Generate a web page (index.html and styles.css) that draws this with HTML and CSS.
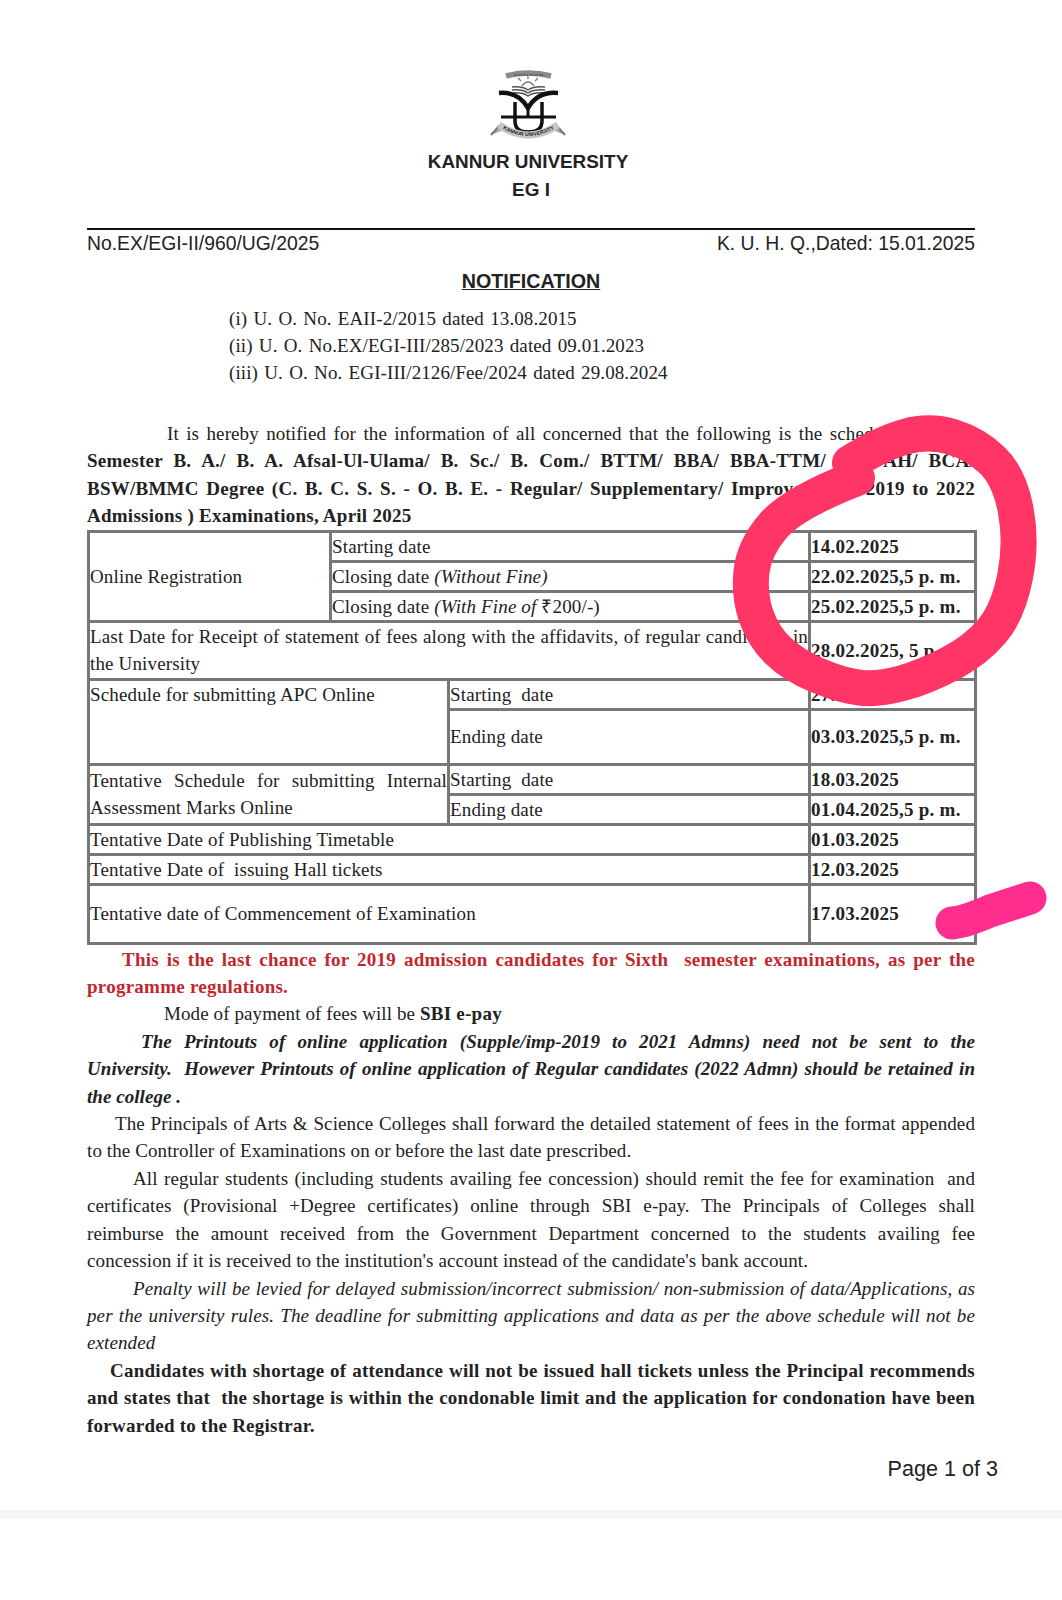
FILE: index.html
```
<!DOCTYPE html>
<html lang="en">
<head>
    <meta charset="UTF-8">
    <meta name="viewport" content="width=device-width, initial-scale=1.0">
    <title>Kannur University Notification</title>
    <link rel="stylesheet" href="styles.css">
</head>
<body>
    <div class="page">
        <div class="head">
            <svg class="crest" viewBox="2 0 90 80" width="90" height="80">
                <path d="M22 11 Q44 5 67 11" fill="none" stroke="#8a8a8a" stroke-width="5.5"/>
                <path d="M30 10 H60" fill="none" stroke="#333" stroke-width="1" stroke-dasharray="1.5 1"/>
                <path d="M38 21 Q44 13 50 21 M44 14 V11 M37 16 L34 13 M51 16 L54 13" fill="none" stroke="#777" stroke-width="1.3"/>
                <path d="M28 22 Q38 21 44 25 Q50 21 61 22 M28 25 Q38 24 44 28 Q50 24 61 25 M29 28 Q38 27 44 31 Q50 27 60 28" fill="none" stroke="#555" stroke-width="1.5"/>
                <path d="M15 28 Q34 26 44 43 Q54 26 74 28" fill="none" stroke="#111" stroke-width="4.5"/>
                <path d="M31 37 V56 Q31 67 44 67 Q58 67 58 56 V37" fill="none" stroke="#111" stroke-width="3.5"/>
                <path d="M44 42 V52 M17 52 H72" fill="none" stroke="#111" stroke-width="3"/>
                <path d="M7 70 L15 61 L22 64 M81 70 L73 61 L66 64" fill="#aaa" stroke="#777" stroke-width="2"/>
                <path id="crest-band" d="M15 60 Q44 80 74 60" fill="none" stroke="#c4c4c4" stroke-width="7"/>
                <text class="crest-text"><textPath href="#crest-band" startOffset="50%" text-anchor="middle">KANNUR UNIVERSITY</textPath></text>
            </svg>
            <div class="uni uni-name">KANNUR UNIVERSITY</div>
            <div class="uni">EG I</div>
        </div>
        <hr class="rule">
        <div class="refline">
            <span>No.EX/EGI-II/960/UG/2025</span>
            <span>K. U. H. Q.,Dated: 15.01.2025</span>
        </div>
        <div class="title">NOTIFICATION</div>
        <ul class="refs">
            <li>(i) U. O. No. EAII-2/2015 dated 13.08.2015</li>
            <li>(ii) U. O. No.EX/EGI-III/285/2023 dated 09.01.2023</li>
            <li>(iii) U. O. No. EGI-III/2126/Fee/2024 dated 29.08.2024</li>
        </ul>
        <p class="para intro">It is hereby notified for the information of all concerned that the following is the schedule for Sixth <b>Semester B. A./ B. A. Afsal-Ul-Ulama/ B. Sc./ B. Com./ BTTM/ BBA/ BBA-TTM/ BBA-AH/ BCA/ BSW/BMMC Degree (C. B. C. S. S. - O. B. E. - Regular/ Supplementary/ Improvement - 2019 to 2022 Admissions ) Examinations, April 2025</b></p>
        <table class="sched">
            <colgroup>
                <col class="c1"><col class="c2"><col class="c3"><col class="c4">
            </colgroup>
            <tr class="h30">
                <td rowspan="3">Online Registration</td>
                <td colspan="2">Starting date</td>
                <td class="dt">14.02.2025</td>
            </tr>
            <tr class="h30">
                <td colspan="2">Closing date <i>(Without Fine)</i></td>
                <td class="dt">22.02.2025,5 p. m.</td>
            </tr>
            <tr class="h30">
                <td colspan="2">Closing date <i>(With Fine of </i>₹200/-)</td>
                <td class="dt">25.02.2025,5 p. m.</td>
            </tr>
            <tr class="h58">
                <td colspan="3" class="just">Last Date for Receipt of statement of fees along with the affidavits, of regular candidates in the University</td>
                <td class="dt">28.02.2025, 5 p. m.</td>
            </tr>
            <tr class="h30">
                <td colspan="2" rowspan="2" class="top">Schedule for submitting APC Online</td>
                <td>Starting &nbsp;date</td>
                <td class="dt">27.02.2025</td>
            </tr>
            <tr class="h55">
                <td>Ending date</td>
                <td class="dt">03.03.2025,5 p. m.</td>
            </tr>
            <tr class="h30">
                <td colspan="2" rowspan="2" class="just">Tentative Schedule for submitting Internal Assessment Marks Online</td>
                <td>Starting &nbsp;date</td>
                <td class="dt">18.03.2025</td>
            </tr>
            <tr class="h30">
                <td>Ending date</td>
                <td class="dt">01.04.2025,5 p. m.</td>
            </tr>
            <tr class="h30">
                <td colspan="3">Tentative Date of Publishing Timetable</td>
                <td class="dt">01.03.2025</td>
            </tr>
            <tr class="h30">
                <td colspan="3">Tentative Date of &nbsp;issuing Hall tickets</td>
                <td class="dt">12.03.2025</td>
            </tr>
            <tr class="h59">
                <td colspan="3">Tentative date of Commencement of Examination</td>
                <td class="dt">17.03.2025</td>
            </tr>
        </table>
        <p class="para red"><b>This is the last chance for 2019 admission candidates for Sixth &nbsp;semester examinations, as per the programme regulations.</b></p>
        <p class="para mode">Mode of payment of fees will be <b>SBI e-pay</b></p>
        <p class="para ind54 fill-last"><b><i>The Printouts of online application (Supple/imp-2019 to 2021 Admns) need not be sent to the</i></b></p>
        <p class="para"><b><i>University. &nbsp;However Printouts of online application of Regular candidates (2022 Admn) should be retained in the college .</i></b></p>
        <p class="para ind28">The Principals of Arts &amp; Science Colleges shall forward the detailed statement of fees in the format appended to the Controller of Examinations on or before the last date prescribed.</p>
        <p class="para ind46 fill-last">All regular students (including students availing fee concession) should remit the fee for examination &nbsp;and certificates (Provisional +Degree certificates) online through SBI e-pay. The Principals of Colleges shall</p>
        <p class="para">reimburse the amount received from the Government Department concerned to the students availing fee concession if it is received to the institution's account instead of the candidate's bank account.</p>
        <p class="para ind46"><i>Penalty will be levied for delayed submission/incorrect submission/ non-submission of data/Applications, as per the university rules. The deadline for submitting applications and data as per the above schedule will not be extended</i></p>
        <p class="para ind23"><b>Candidates with shortage of attendance will not be issued hall tickets unless the Principal recommends and states that &nbsp;the shortage is within the condonable limit and the application for condonation have been forwarded to the Registrar.</b></p>
        <div class="pageno">Page 1 of 3</div>
    </div>
    <div class="band"></div>

    <svg class="ink" viewBox="0 0 1062 1600" width="1062" height="1600">
        <path class="ring" d="M850,463 Q882,443 906,436.5 Q930,430 952.5,437 Q975,444 992,460 Q1009,476 1015.5,509 Q1022,542 1015,577 Q1008,612 992,631 Q976,650 950.5,663.5 Q925,677 901,683.5 Q877,690 858.5,687.5 Q840,685 816.5,675 Q793,665 778,650.5 Q763,636 756,615.5 Q749,595 751.5,571.5 Q754,548 773.5,525.5 Q793,503 857,478"/>
        <path class="dash" d="M952,923 Q965,922 990,911 L1030,898"/>
    </svg>
</body>
</html>
```
FILE: styles.css
```
body {
    margin: 0;
    background-color: #fff;
    color: #222;
    font-family: "Liberation Serif", "Times New Roman", serif;
}
.page {
    box-sizing: border-box;
    height: 1510px;
    padding: 65px 87px 0;
}
.head {
    text-align: center;
}
.crest {
    display: block;
    margin: 0 auto 3px;
}
.crest-text {
    font-family: "Liberation Sans", Arial, sans-serif;
    font-weight: bold;
    font-size: 5px;
    fill: #222;
    dominant-baseline: middle;
}
.uni {
    font-family: "Liberation Sans", Arial, sans-serif;
    font-weight: bold;
    font-size: 18.9px;
    line-height: 27.5px;
}
.uni-name {
    padding-right: 6px;
}
.rule {
    border: none;
    border-top: 2px solid #111;
    margin: 25px 0 0;
}
.refline {
    display: flex;
    justify-content: space-between;
    font-family: "Liberation Sans", Arial, sans-serif;
    font-size: 19.35px;
    line-height: 28px;
    margin-top: -1px;
}
.title {
    font-family: "Liberation Sans", Arial, sans-serif;
    font-weight: bold;
    font-size: 19.7px;
    text-align: center;
    text-decoration: underline;
    margin-top: 10px;
    line-height: 28px;
}
.refs {
    list-style: none;
    margin: 10px 0 0 142px;
    padding: 0;
    font-size: 19px;
    letter-spacing: 0.1px;
    word-spacing: 1.4px;
    line-height: 27px;
}
.para {
    margin: 0;
    font-size: 19px;
    letter-spacing: 0.1px;
    line-height: 27.4px;
    text-align: justify;
}
.para b {
    letter-spacing: 0.25px;
}
.para b i {
    letter-spacing: 0.05px;
}
.fill-last {
    text-align-last: justify;
}
.intro {
    margin-top: 34px;
    text-indent: 80px;
}
.sched {
    border-collapse: collapse;
    table-layout: fixed;
    width: 890px;
    font-size: 19px;
    letter-spacing: 0.15px;
    line-height: 27px;
}
.sched td {
    border: 3px solid #777;
    padding: 0;
}
.c1 { width: 242px; }
.c2 { width: 118px; }
.c3 { width: 361px; }
.h30 { height: 30px; }
.h55 { height: 55px; }
.h58 { height: 58px; }
.h59 { height: 59px; }
.sched .dt {
    font-weight: bold;
    letter-spacing: 0.25px;
}
.top { vertical-align: top; }
.just { text-align: justify; }
.red {
    color: #c2272d;
    margin-top: 1px;
    text-indent: 35px;
}
.mode { text-indent: 77px; }
.ind54 { text-indent: 54px; }
.ind28 { text-indent: 28px; }
.ind46 { text-indent: 46px; }
.ind23 { text-indent: 23px; }
.pageno {
    font-family: "Liberation Sans", Arial, sans-serif;
    font-size: 21.6px;
    text-align: right;
    margin: 17px -23px 0 0;
}
.band {
    height: 9px;
    background-color: #f5f5f5;
}
.ink {
    position: absolute;
    left: 0;
    top: 0;
    fill: none;
    stroke-linecap: round;
    stroke-linejoin: round;
}
.ring {
    stroke: #ff3565;
    stroke-width: 36;
}
.dash {
    stroke: #ff2d8e;
    stroke-width: 33;
}
```
